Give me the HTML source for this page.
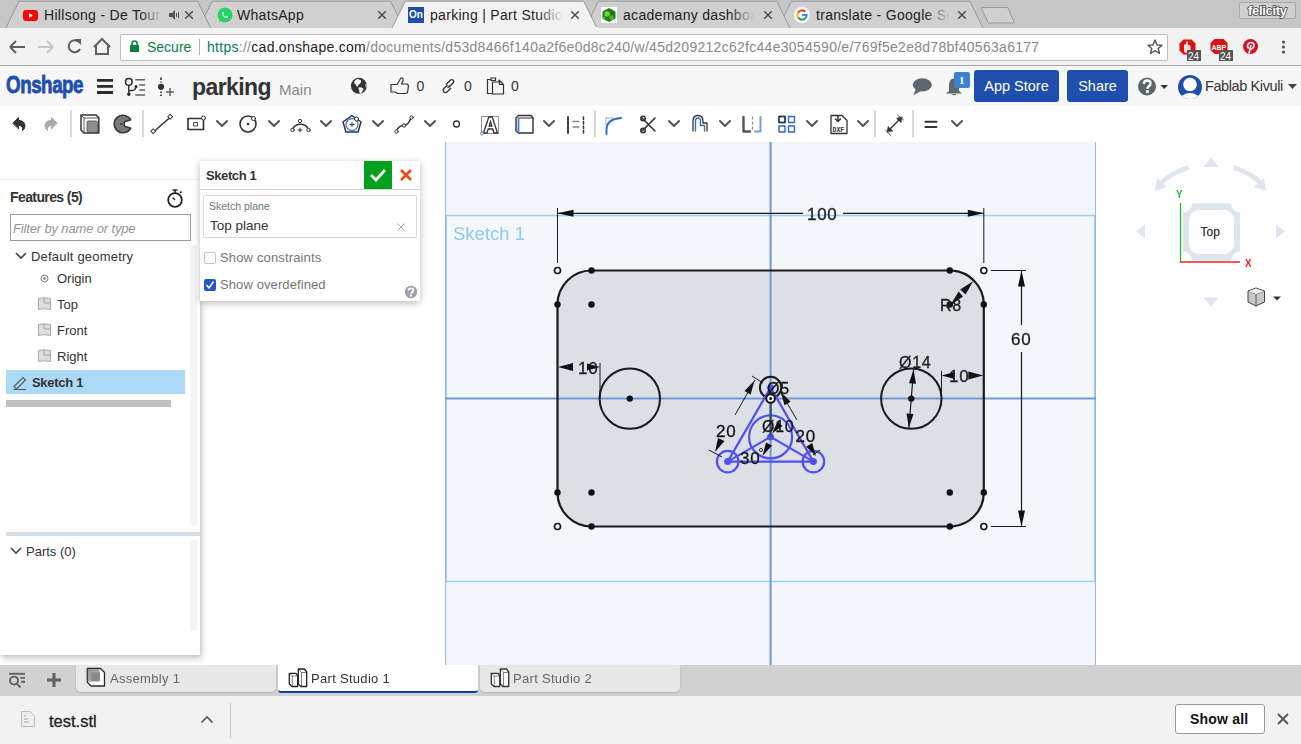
<!DOCTYPE html>
<html><head><meta charset="utf-8">
<style>
*{box-sizing:border-box;margin:0;padding:0}
html,body{width:1301px;height:744px;overflow:hidden;background:#fff;font-family:"Liberation Sans",sans-serif;position:relative}
.a{position:absolute}
.t{position:absolute;white-space:nowrap;line-height:1}
svg{position:absolute;overflow:visible}
#tabbar{left:0;top:0;width:1301px;height:29px;background:#c6c6c6}
#toolbar{left:0;top:28px;width:1301px;height:38px;background:#f2f2f2;border-top:1px solid #a8a8a8;border-bottom:1px solid #a6a6a6}
#omni{left:120px;top:34px;width:1048px;height:27px;background:#fff;border:1px solid #bdbdbd;border-radius:2px}
#header{left:0;top:66px;width:1301px;height:40px;background:#f7f7f7}
#tools{left:0;top:106px;width:1301px;height:36px;background:#fff}
#canvas{left:445px;top:142px;width:651px;height:523px;background:#f3f6fa}
#btabs{left:0;top:665px;width:1301px;height:31px;background:#d1d1d1}
#shelf{left:0;top:696px;width:1301px;height:48px;background:#f2f2f2}
.tabtxt{font-size:14px;color:#222;top:8px;overflow:hidden;height:18px}
.btn{position:absolute;background:#1f4fae;color:#fff;font-size:14.5px;border-radius:3px;text-align:center;line-height:33px}
</style></head><body>
<div id="tabbar" class="a"></div>
<!-- tabs -->
<svg width="1301" height="30" style="left:0;top:0">
  <g stroke="#999" stroke-width="1"><path d="M778.0 28.5 L791.4 1.2 L969.9 1.2 L983.3 28.5" fill="#d0d0d0"/><path d="M584.9 28.5 L598.3 1.2 L776.8 1.2 L790.2 28.5" fill="#d0d0d0"/><path d="M198.7 28.5 L212.1 1.2 L390.6 1.2 L404.0 28.5" fill="#d0d0d0"/><path d="M5.6 28.5 L19.0 1.2 L197.5 1.2 L210.9 28.5" fill="#d0d0d0"/></g>
  <path d="M982 7.5 Q981 7.5 981.6 8.6 L988 22.4 Q988.3 23 989 23 H1013.5 Q1014.5 23 1014 22 L1008 8 Q1007.7 7.5 1007 7.5 Z" fill="#d0d0d0" stroke="#999" stroke-width="1"/>
  <path d="M0 28.5 L1301 28.5" stroke="#999"/>
  <path stroke="#999" stroke-width="1" d="M391.8 28.5 L405.2 1.2 L583.7 1.2 L597.1 28.5" fill="#f2f2f2"/>
</svg>
<div id="toolbar" class="a" style="border-top:none"></div>
<svg width="1301" height="30" style="left:0;top:0">
  <rect x="392.9" y="27" width="205.6" height="3" fill="#f2f2f2"/>
</svg>
<!-- tab contents -->
<svg width="15" height="11" style="left:23px;top:10px"><rect x="0" y="0" width="15" height="11" rx="3" fill="#f00"/><path d="M6 3 L10 5.5 L6 8 Z" fill="#fff"/></svg>
<div class="t tabtxt" style="left:44px;width:122px;letter-spacing:0.3px">Hillsong - De Tour</div>
<div class="a" style="left:140px;top:4px;width:22px;height:22px;background:linear-gradient(to right,rgba(0,0,0,0),#d0d0d0)"></div><div class="a" style="left:162px;top:4px;width:6px;height:22px;background:#d0d0d0"></div>
<svg width="10" height="10" style="left:169px;top:10px"><path d="M0 3 H3 L6 0 V10 L3 7 H0 Z" fill="#555"/><path d="M7.5 3 V7 M9.5 2 V8" stroke="#555" stroke-width="1"/></svg>
<svg width="10" height="10" style="left:184px;top:10px"><path d="M1.2 1.2 L8.8 8.8 M8.8 1.2 L1.2 8.8" stroke="#4a4a4a" stroke-width="1.4"/></svg>
<svg width="16" height="16" style="left:217px;top:7px"><circle cx="8" cy="8" r="7.5" fill="#25d366"/><path d="M2 15 L3 11 L6 13 Z" fill="#25d366"/><path d="M5 5 C5 9 7 11 11 11 L11 9.5 L9.5 9 L8.7 9.8 C7.5 9.2 6.8 8.5 6.2 7.3 L7 6.5 L6.5 5 Z" fill="#fff"/></svg>
<div class="t tabtxt" style="left:237px;letter-spacing:0.3px">WhatsApp</div>
<svg width="10" height="10" style="left:377px;top:10px"><path d="M1.2 1.2 L8.8 8.8 M8.8 1.2 L1.2 8.8" stroke="#4a4a4a" stroke-width="1.4"/></svg>
<div class="a" style="left:408px;top:7px;width:16px;height:16px;background:#1e4ea8;color:#fff;font-size:10px;font-weight:bold;line-height:16px;text-align:center">On</div>
<div class="t tabtxt" style="left:430px;width:135px;letter-spacing:0.3px">parking | Part Studio</div>
<div class="a" style="left:537px;top:4px;width:26px;height:22px;background:linear-gradient(to right,rgba(0,0,0,0),#f2f2f2)"></div><div class="a" style="left:563px;top:4px;width:6px;height:22px;background:#f2f2f2"></div><svg width="10" height="10" style="left:570px;top:10px"><path d="M1.2 1.2 L8.8 8.8 M8.8 1.2 L1.2 8.8" stroke="#4a4a4a" stroke-width="1.4"/></svg>
<svg width="16" height="16" style="left:601px;top:7px"><rect width="16" height="16" fill="#fff"/><path d="M8 1 L14.5 4.5 V11.5 L8 15 L1.5 11.5 V4.5 Z" fill="#1d7a16"/><circle cx="6" cy="7" r="2.8" fill="#6fd13b"/><circle cx="10.5" cy="10.5" r="2.2" fill="#52b52b"/><circle cx="3" cy="11" r="1.5" fill="#52b52b"/></svg>
<div class="t tabtxt" style="left:623px;width:135px;letter-spacing:0.3px">academany dashboard</div>
<div class="a" style="left:729px;top:4px;width:26px;height:22px;background:linear-gradient(to right,rgba(0,0,0,0),#d0d0d0)"></div><div class="a" style="left:755px;top:4px;width:6px;height:22px;background:#d0d0d0"></div><svg width="10" height="10" style="left:763px;top:10px"><path d="M1.2 1.2 L8.8 8.8 M8.8 1.2 L1.2 8.8" stroke="#4a4a4a" stroke-width="1.4"/></svg>
<svg width="16" height="16" style="left:794px;top:7px"><circle cx="8" cy="8" r="8" fill="#fff"/>
<path d="M11.3 4.8 A4.6 4.6 0 0 0 4.1 5.6" stroke="#ea4335" stroke-width="2.1" fill="none"/>
<path d="M4.1 5.6 A4.6 4.6 0 0 0 4.1 10.4" stroke="#fbbc05" stroke-width="2.1" fill="none"/>
<path d="M4.1 10.4 A4.6 4.6 0 0 0 11.6 11" stroke="#34a853" stroke-width="2.1" fill="none"/>
<path d="M11.6 11 A4.6 4.6 0 0 0 12.6 8 H8" stroke="#4285f4" stroke-width="2.1" fill="none"/>
</svg>
<div class="t tabtxt" style="left:816px;width:135px;letter-spacing:0.3px">translate - Google Search</div>
<div class="a" style="left:924px;top:4px;width:26px;height:22px;background:linear-gradient(to right,rgba(0,0,0,0),#d0d0d0)"></div><div class="a" style="left:950px;top:4px;width:6px;height:22px;background:#d0d0d0"></div><svg width="10" height="10" style="left:957px;top:10px"><path d="M1.2 1.2 L8.8 8.8 M8.8 1.2 L1.2 8.8" stroke="#4a4a4a" stroke-width="1.4"/></svg>
<div class="a" style="left:1239px;top:2px;width:57px;height:17px;border:1px solid #aaa;border-radius:2px;background:#cfcfcf"></div>
<div class="t" style="left:1248px;top:4px;font-size:13px;font-weight:bold;color:#fff;-webkit-text-stroke:1.6px #444;paint-order:stroke fill;letter-spacing:-0.3px">felicity</div>

<!-- address bar -->
<div id="omni" class="a"></div>
<svg width="110" height="30" style="left:0;top:32px">
  <path d="M10 15 H25 M10 15 L16 9 M10 15 L16 21" stroke="#5f5f5f" stroke-width="2" fill="none"/>
  <path d="M38 15 H53 M53 15 L47 9 M53 15 L47 21" stroke="#c6c6c6" stroke-width="2" fill="none"/>
  <path d="M79 10 A6 6 0 1 0 80 17" stroke="#5f5f5f" stroke-width="2" fill="none"/><path d="M75 7 L81 7 L81 13 Z" fill="#5f5f5f"/>
  <path d="M94 15 L102 7 L110 15 M96 13 V22 H108 V13" stroke="#5f5f5f" stroke-width="2" fill="none"/>
</svg>
<svg width="10" height="12" style="left:130px;top:40px"><rect x="0" y="5" width="9" height="7" fill="#0b8043"/><path d="M2 5 V3.5 A2.5 2.5 0 0 1 7 3.5 V5" stroke="#0b8043" stroke-width="1.6" fill="none"/></svg>
<div class="t" style="left:147px;top:40px;font-size:14px;color:#0b8043">Secure</div>
<div class="a" style="left:199px;top:39px;width:1px;height:16px;background:#b5b5b5"></div>
<div class="t" style="left:207px;top:40px;font-size:14px;color:#888;letter-spacing:0.28px"><span style="color:#0b8043">https</span>://<span style="color:#222">cad.onshape.com</span>/documents/d53d8466f140a2f6e0d8c240/w/45d209212c62fc44e3054590/e/769f5e2e8d78bf40563a6177</div>

<svg width="140" height="40" style="left:1160px;top:28px">
  <g transform="translate(-1160 -28)">
  <path d="M1183.5 39.5 H1191.5 L1195.5 43.5 V50.5 L1191.5 54.5 H1183.5 L1179.5 50.5 V43.5 Z" fill="#e01010"/>
  <path d="M1184 52 V45 Q1185 43 1186 45 V42 Q1187 40.5 1188 42 V45 Q1189.5 44 1190.5 46 V50 Q1190 53 1187 53 Z" fill="#fff" opacity="0.85"/>
  <rect x="1187" y="50" width="14" height="11" fill="#555"/>
  <text x="1188" y="59.5" font-size="10" fill="#fff" font-family="Liberation Sans">24</text>
  <path d="M1214.5 39 H1223.5 L1227.5 43 V50 L1223.5 54 H1214.5 L1210.5 50 V43 Z" fill="#d81414"/>
  <text x="1211.5" y="50" font-size="7" font-weight="bold" fill="#fff" font-family="Liberation Sans">ABP</text>
  <rect x="1219" y="50" width="14" height="11" fill="#555"/>
  <text x="1220" y="59.5" font-size="10" fill="#fff" font-family="Liberation Sans">24</text>
  <circle cx="1250.5" cy="46.5" r="7.5" fill="#d50c22"/>
  <circle cx="1250.5" cy="46.5" r="6" fill="none" stroke="#fff" stroke-width="0" />
  <path d="M1249 53.5 L1251 45 M1248.5 48.5 Q1246.5 46 1248.5 43.5 Q1251 41.5 1253.5 43.5 Q1255 46 1252.5 48.5 Q1250.5 49.5 1250 48" stroke="#fff" stroke-width="1.6" fill="none"/>
  <circle cx="1283.5" cy="42" r="1.6" fill="#555"/><circle cx="1283.5" cy="47" r="1.6" fill="#555"/><circle cx="1283.5" cy="52" r="1.6" fill="#555"/>
  <path d="M1155 40 L1157 45 L1162 45.3 L1158.2 48.5 L1159.5 53.5 L1155 50.7 L1150.5 53.5 L1151.8 48.5 L1148 45.3 L1153 45 Z" fill="none" stroke="#555" stroke-width="1.4" stroke-linejoin="round"/>
  </g>
</svg>

<!-- onshape header -->
<div id="header" class="a"></div>
<div class="t" style="left:6px;top:74px;font-size:23.5px;font-weight:bold;color:#1f4fae;letter-spacing:-0.6px;transform:scaleX(0.8);transform-origin:left;-webkit-text-stroke:0.8px #1f4fae">Onshape</div>
<svg width="100" height="34" style="left:90px;top:70px">
  <g transform="translate(-90 -70)">
  <path d="M97 80.4 H113 M97 86.4 H113 M97 92.5 H113" stroke="#2b2b2b" stroke-width="2.8"/>
  <circle cx="128.8" cy="81.9" r="3.3" fill="none" stroke="#2b2b2b" stroke-width="1.5"/>
  <path d="M128.8 85.2 V94 M128.8 91 Q129 90.5 132 90.5 Q135.5 90.5 136 86.5" fill="none" stroke="#2b2b2b" stroke-width="1.4"/>
  <circle cx="128.8" cy="94.3" r="1.7" fill="#2b2b2b"/><circle cx="136" cy="86.5" r="1.5" fill="#2b2b2b"/>
  <path d="M135.3 79.8 H145 M139.3 85 H145 M139.3 90 H145 M135.3 95 H145" stroke="#56636e" stroke-width="1.6"/>
  <path d="M161 77.5 V80 M161 81.5 V82.5 M161 91.5 V93 M161 94.5 V96" stroke="#111" stroke-width="1.4"/>
  <circle cx="161" cy="86.8" r="3.1" fill="#333"/>
  <path d="M166 92 H174 M170 88 V96" stroke="#56636e" stroke-width="1.6"/>
  </g>
</svg>
<div class="t" style="left:192px;top:76px;font-size:23px;font-weight:bold;color:#333;letter-spacing:-0.6px">parking</div>
<div class="t" style="left:279px;top:82px;font-size:15px;color:#888">Main</div>
<svg width="200" height="30" style="left:340px;top:70px">
  <g transform="translate(-340 -70)">
  <circle cx="358.9" cy="85.8" r="8" fill="#333"/>
  <path d="M354.2 81.5 Q356 78.8 358.5 78.8 L359.5 80 L361 80.2 L361.2 82 L360 83.8 L358.5 84.5 L357.8 86.8 L356.5 86 L355.8 84.5 L354.6 84 Z" fill="#f7f7f7"/>
  <path d="M358.2 87.6 L361 87.2 L363.5 88.8 L362.8 91 L360.8 93.5 L359.6 93.2 L359.2 90.8 Z" fill="#f7f7f7"/>
  <path d="M365.3 83.8 L366.5 84.5 L366.6 87 L365.8 87.5 Z" fill="#f7f7f7"/>
  <path d="M391 84.5 H397 L401 78 Q403.5 77.5 403 80.5 L401.5 84 H407 Q409 85 408.3 87 L407.5 92.5 Q407 93.5 405.5 93.5 H397.5 L395 92 H391 Z" fill="none" stroke="#333" stroke-width="1.2" stroke-linejoin="round"/>
  <text x="416.5" y="91" font-size="14" fill="#333" font-family="Liberation Sans">0</text>
  <path d="M447.5 85 L443.5 89 Q442.5 90.5 444 92 Q445.5 93 447 92 L451 88 M449 87 L453 83 Q454.5 81.5 453 80 Q451.5 79 450 80.5 L446 84.5 M447.5 88 L450 85.5" fill="none" stroke="#333" stroke-width="1.4"/>
  <text x="464" y="91" font-size="14" fill="#333" font-family="Liberation Sans">0</text>
  <path d="M491 79.5 H487.5 V93.5 H492 M491 78 H495.5 V80.5 H491 Z M499 80 V82 H492.5 V94 H503.5 V84.5 L499.5 80.5 V84.5 H503.5" fill="none" stroke="#333" stroke-width="1.2"/>
  <text x="511" y="91" font-size="14" fill="#333" font-family="Liberation Sans">0</text>
  </g>
</svg>
<svg width="80" height="40" style="left:900px;top:66px">
  <g transform="translate(-900 -66)">
  <ellipse cx="922.3" cy="84.8" rx="9.6" ry="6.6" fill="#5e666d"/><path d="M916 89 L913.2 95.3 L922 90.5 Z" fill="#5e666d"/>
  <path d="M949 86 Q949 78.5 954 78.5 Q959 78.5 959 86 V91 L962 93.5 H946 L949 91 Z" fill="#5e666d"/><path d="M951.5 94 Q954 96.5 956.5 94 Z" fill="#5e666d"/>
  <rect x="954" y="72" width="16" height="16" rx="2" fill="#3d82d1"/><text x="959" y="84" font-size="11" font-weight="bold" fill="#fff" font-family="Liberation Serif">1</text>
  </g>
</svg>
<div class="btn" style="left:974px;top:70px;width:85px;height:32px">App Store</div>
<div class="btn" style="left:1067px;top:70px;width:61px;height:32px">Share</div>
<svg width="170" height="40" style="left:1130px;top:66px">
  <g transform="translate(-1130 -66)">
  <circle cx="1147" cy="86.5" r="9" fill="#5e666d"/>
  <path d="M1143.8 84 Q1143.8 80.5 1147.2 80.5 Q1150.5 80.5 1150.5 83.5 Q1150.5 85.5 1148.5 86.5 Q1147.5 87 1147.5 89" stroke="#fff" stroke-width="2.4" fill="none"/>
  <rect x="1146" y="90.3" width="2.8" height="2.6" fill="#fff"/>
  <path d="M1160.5 85 H1168 L1164.2 89 Z" fill="#333"/>
  <clipPath id="avc"><circle cx="1190" cy="87" r="12"/></clipPath>
  <circle cx="1190" cy="87" r="12" fill="#1f4fae"/>
  <g clip-path="url(#avc)"><circle cx="1190" cy="84.5" r="6.8" fill="#fff"/><ellipse cx="1190" cy="101" rx="10" ry="8" fill="#fff"/></g>
  </g>
</svg>
<div class="t" style="left:1205px;top:79px;font-size:14.5px;color:#333;letter-spacing:-0.4px">Fablab Kivuli</div>
<svg width="10" height="6" style="left:1288px;top:84px"><path d="M0 0 H9 L4.5 5 Z" fill="#444"/></svg>


<div id="tools" class="a"></div>
<svg width="1000" height="36" style="left:0;top:106px" fill="none" stroke-linecap="round" stroke-linejoin="round">
  <!-- undo / redo -->
  <path d="M13 17 L18.5 11.5 L18.5 14.5 Q25 14.5 25 20 Q25 23 22.5 24.5 Q23.5 19.5 18.5 19.5 L18.5 22.5 Z" fill="#333" stroke="#333" stroke-width="1"/>
  <path d="M57 17 L51.5 11.5 L51.5 14.5 Q45 14.5 45 20 Q45 23 47.5 24.5 Q46.5 19.5 51.5 19.5 L51.5 22.5 Z" fill="#aaa" stroke="#aaa" stroke-width="1"/>
  <path d="M71 5 V30.5 M143 5 V30.5 M595 5 V30.5 M875 5 V30.5 M913 5 V30.5" stroke="#d6d6d6" stroke-width="2"/>
  <!-- sheet metal -->
  <path d="M81 9 H96 L98.8 11.8 V27 H84 L81 24 Z" fill="#fff" stroke="#333" stroke-width="1.5"/>
  <path d="M81 9 L84 12 H98.8 M84 12 V27" stroke="#333" stroke-width="0.8"/>
  <path d="M88 15 H96.5 L98 16.5 V26.5 H88 Z" fill="#8f8f8f" stroke="#444" stroke-width="0.8"/>
  <path d="M86.5 15.5 L88 15 V26.5 L86.5 25.5 Z" fill="#777"/>
  <!-- C revolve -->
  <path d="M130.77 13.87 A8.8 8.8 0 1 0 130.77 22.13 L127.0 21.0 A3 3 0 0 1 127.0 15.0 Z" fill="#7a7a7a" stroke="#333" stroke-width="1.5" stroke-linejoin="round"/><circle cx="121" cy="18" r="0.9" fill="#333" stroke="none"/>
  <!-- line -->
  <path d="M154 25.5 L170.5 11" stroke="#333" stroke-width="1.6"/>
  <rect x="151.5" y="23.5" width="3.5" height="3.5" transform="rotate(45 153.2 25.2)" fill="#fff" stroke="#333" stroke-width="1"/>
  <rect x="168.5" y="9" width="3.5" height="3.5" transform="rotate(45 170.2 10.7)" fill="#fff" stroke="#333" stroke-width="1"/>
  <!-- rect -->
  <rect x="188" y="12.5" width="15.5" height="11" stroke="#333" stroke-width="1.6"/>
  <rect x="194" y="16.5" width="3.5" height="3.5" stroke="#333" stroke-width="0.9"/>
  <circle cx="203.5" cy="12" r="2" fill="#fff" stroke="#333" stroke-width="1"/>
  <g stroke="#555" stroke-width="2"><path d="M217 15 L222 20 L227 15"/><path d="M269 15 L274 20 L279 15"/><path d="M321 15 L326 20 L331 15"/><path d="M373 15 L378 20 L383 15"/><path d="M425 15 L430 20 L435 15"/>
  <path d="M544 15 L549 20 L554 15"/><path d="M669 15 L674 20 L679 15"/><path d="M720 15 L725 20 L730 15"/><path d="M807 15 L812 20 L817 15"/><path d="M858 15 L863 20 L868 15"/><path d="M952 15 L957 20 L962 15"/></g>
  <!-- circle -->
  <circle cx="248" cy="18" r="8" stroke="#333" stroke-width="1.6"/><circle cx="248" cy="18" r="1.3" fill="#333" stroke="none"/>
  <circle cx="253.5" cy="12.5" r="2" fill="#fff" stroke="#333" stroke-width="1"/>
  <!-- arc -->
  <path d="M292.5 23.5 A8.5 8 0 0 1 308.5 23.5" stroke="#333" stroke-width="1.5"/>
  <circle cx="300" cy="15" r="1.7" fill="#fff" stroke="#333" stroke-width="1"/><circle cx="292.5" cy="24" r="1.7" fill="#fff" stroke="#333" stroke-width="1"/><circle cx="308.5" cy="24" r="1.7" fill="#fff" stroke="#333" stroke-width="1"/>
  <path d="M298 24 H302 M300 22 V26" stroke="#333" stroke-width="1"/>
  <!-- polygon -->
  <path d="M352 9.5 L361 16 L358 26 H346 L343 16 Z" stroke="#333" stroke-width="1.5"/>
  <circle cx="352" cy="18.5" r="6" stroke="#3f7fd6" stroke-width="1.3"/>
  <path d="M350 18.5 H354 M352 16.5 V20.5" stroke="#333" stroke-width="1"/>
  <circle cx="356.5" cy="13" r="2" fill="#fff" stroke="#333" stroke-width="1"/>
  <!-- spline -->
  <path d="M396.5 25 Q399 19 404 19.5 Q408 19.5 411 12" stroke="#333" stroke-width="1.5"/>
  <circle cx="396.5" cy="25.5" r="1.7" fill="#fff" stroke="#333" stroke-width="1"/><circle cx="404" cy="19.5" r="1.7" fill="#fff" stroke="#333" stroke-width="1"/><circle cx="411.5" cy="11.5" r="1.7" fill="#fff" stroke="#333" stroke-width="1"/>
  <!-- point -->
  <circle cx="456.5" cy="18" r="3" stroke="#333" stroke-width="1.3"/>
  <!-- text A -->
  <rect x="481.5" y="10.5" width="17" height="17" stroke="#666" stroke-width="0.8" stroke-dasharray="1 1"/>
  <path d="M483.5 27 L488.8 11 H492.2 L497.5 27 H494 L492.8 23 H488.2 L487 27 Z M489.2 20 H491.8 L490.5 15.5 Z" fill="#fff" stroke="#333" stroke-width="1.3" stroke-linejoin="miter"/>
  <circle cx="482" cy="27.5" r="1.5" fill="#fff" stroke="#3f7fd6" stroke-width="0.9"/>
  <!-- use/project -->
  <path d="M516 12 L518.5 9.5 H531 L533 12 V27 H518.5 L516 25 Z" stroke="#333" stroke-width="1.4"/>
  <path d="M516 12 H531 L533 12 M531 9.5 V27" stroke="#333" stroke-width="0"/>
  <path d="M518.5 12 H533 M518.5 12 V27" stroke="#333" stroke-width="1.2"/>
  <path d="M518.5 13 V27" stroke="#3f7fd6" stroke-width="1.6"/>
  <!-- mirror -->
  <path d="M568 11 V27 M583.5 11 V27" stroke="#333" stroke-width="1.5" stroke-dasharray="2.5 2"/>
  <path d="M568 11 V27" stroke="#333" stroke-width="1.6"/>
  <path d="M573 15.5 H579 M573 21 H579" stroke="#888" stroke-width="1.4"/>
  <!-- fillet -->
  <path d="M606.5 28 V24 Q606.5 13 621 12" stroke="#2a6ac9" stroke-width="2"/>
  <path d="M606 12 H614 M606 12 V20" stroke="#666" stroke-width="0.6" stroke-dasharray="1 1"/>
  <!-- scissors -->
  <path d="M642 12 L655 25 M655 12 L642 25" stroke="#333" stroke-width="1.6"/>
  <circle cx="643" cy="12.5" r="2.2" stroke="#333" stroke-width="1.6"/><circle cx="643" cy="24.5" r="2.2" stroke="#333" stroke-width="1.6"/>
  <!-- offset -->
  <path d="M693 25 V15 Q693 9.5 698 9.5 Q703 9.5 703 15 V17 H707 V25" stroke="#333" stroke-width="1.3"/>
  <path d="M695.5 25 V15 Q695.5 12 698 12 Q700.5 12 700.5 15 V19.5 H704.5 V25" stroke="#2a6ac9" stroke-width="1.3"/>
  <!-- L|J mirror-->
  <path d="M743.5 11 V25.5 H750" stroke="#555" stroke-width="2.4"/>
  <path d="M752.5 11 V13 M752.5 16 V18 M752.5 21 V23" stroke="#888" stroke-width="1.2"/>
  <path d="M760.5 11 V25.5 H755" stroke="#6fa4e0" stroke-width="2"/>
  <!-- grid pattern -->
  <g stroke="#2a6ac9" stroke-width="1.4"><rect x="779" y="10.5" width="6" height="6"/><rect x="788.5" y="10.5" width="6" height="6"/><rect x="779" y="20" width="6" height="6"/><rect x="788.5" y="20" width="6" height="6"/></g>
  <rect x="779" y="10.5" width="6" height="6" stroke="#333" stroke-width="1.4"/>
  <!-- DXF -->
  <path d="M831 9.5 H842 L847 14.5 V27.5 H831 Z" stroke="#333" stroke-width="1.3"/>
  <path d="M838 10 V15 M835.5 13 L838 15.5 L840.5 13" stroke="#333" stroke-width="1.5"/>
  <text x="832.5" y="26" font-size="6.5" font-weight="bold" fill="#333" stroke="none" font-family="Liberation Mono">DXF</text>
  <!-- dimension -->
  <path d="M889.5 23.5 L899.5 13.5" stroke="#333" stroke-width="1.4"/>
  <path d="M887 26 L888.2 20.5 L892.5 24.8 Z M902 11 L896.5 12.2 L900.8 16.5 Z" fill="#333" stroke="#333" stroke-width="0.6" stroke-linejoin="round"/>
  <path d="M885.5 24 L891 30 M897.5 9 L903.5 14" stroke="#444" stroke-width="0.8"/>
  <!-- equals -->
  <path d="M925.5 15.8 H936.5 M925.5 21 H936.5" stroke="#333" stroke-width="2.1"/>
</svg>

<svg width="651" height="523" style="left:445px;top:142px;overflow:hidden;will-change:transform"><g transform="translate(-445 -142)">
<rect x="445" y="142" width="651" height="523" fill="#f3f6fa"/>
<path d="M445 215.5 H1096 M445 581.5 H1096" stroke="#9dd0f2" stroke-width="1.3"/>
<path d="M445.5 142 V665" stroke="#a4badf" stroke-width="1.2"/><path d="M445.8 215.5 V581.5" stroke="#8bbde8" stroke-width="1.8"/>
<path d="M1095.5 142 V665" stroke="#a4badf" stroke-width="1.2"/><path d="M1095.2 215.5 V581.5" stroke="#8bbde8" stroke-width="1.8"/>
<rect x="557.5" y="270.5" width="426.29999999999995" height="256.0" rx="34" ry="34" fill="#dcdfe6"/>
<path d="M770.6 142 V665 M445 398.5 H1096" stroke="#6f9bd0" stroke-width="2"/>
<text x="453" y="239.5" font-size="18.5" fill="#8ecbee" font-family="Liberation Sans">Sketch 1</text>
<rect x="557.5" y="270.5" width="426.29999999999995" height="256.0" rx="34" ry="34" fill="none" stroke="#1a1a1a" stroke-width="2.2"/>
<circle cx="591.5" cy="270.5" r="3.2" fill="#111"/>
<circle cx="557.5" cy="304.5" r="3.2" fill="#111"/>
<circle cx="591.5" cy="304.5" r="3.2" fill="#111"/>
<circle cx="949.8" cy="270.5" r="3.2" fill="#111"/>
<circle cx="983.8" cy="304.5" r="3.2" fill="#111"/>
<circle cx="949.8" cy="304.5" r="3.2" fill="#111"/>
<circle cx="557.5" cy="492.5" r="3.2" fill="#111"/>
<circle cx="591.5" cy="526.5" r="3.2" fill="#111"/>
<circle cx="591.5" cy="492.5" r="3.2" fill="#111"/>
<circle cx="983.8" cy="492.5" r="3.2" fill="#111"/>
<circle cx="949.8" cy="526.5" r="3.2" fill="#111"/>
<circle cx="949.8" cy="492.5" r="3.2" fill="#111"/>
<circle cx="557.5" cy="270.5" r="3" fill="#fff" stroke="#111" stroke-width="1.6"/>
<circle cx="983.8" cy="270.5" r="3" fill="#fff" stroke="#111" stroke-width="1.6"/>
<circle cx="557.5" cy="526.5" r="3" fill="#fff" stroke="#111" stroke-width="1.6"/>
<circle cx="983.8" cy="526.5" r="3" fill="#fff" stroke="#111" stroke-width="1.6"/>
<circle cx="629.8" cy="398.6" r="30.2" fill="none" stroke="#1a1a1a" stroke-width="2"/>
<circle cx="629.8" cy="398.6" r="3.2" fill="#111"/>
<circle cx="911.3" cy="398.6" r="30.2" fill="none" stroke="#1a1a1a" stroke-width="2"/>
<circle cx="911.3" cy="398.6" r="3.2" fill="#111"/>
<path d="M557.5 208 V263 M983.8 208 V263" stroke="#1a1a1a" stroke-width="1"/>
<path d="M557.5 213.3 H803 M843 213.3 H983.8" stroke="#1a1a1a" stroke-width="1.2"/>
<path d="M557.5 213.3 L573.5 209.8 L573.5 216.8 Z" fill="#111"/>
<path d="M983.8 213.3 L967.8 216.8 L967.8 209.8 Z" fill="#111"/>
<text x="807" y="220" font-size="17" fill="#222" font-family="Liberation Sans" stroke="#1a1a1a" stroke-width="0.3" letter-spacing="0.7">100</text>
<path d="M991 270.5 H1026 M991 526.5 H1026" stroke="#1a1a1a" stroke-width="1"/>
<path d="M1021.5 270.5 V325 M1021.5 352 V526.5" stroke="#1a1a1a" stroke-width="1.2"/>
<path d="M1021.5 270.5 L1025.0 286.5 L1018.0 286.5 Z" fill="#111"/>
<path d="M1021.5 526.5 L1018.0 510.5 L1025.0 510.5 Z" fill="#111"/>
<text x="1011" y="345" font-size="17" fill="#222" font-family="Liberation Sans" stroke="#1a1a1a" stroke-width="0.3" letter-spacing="0.7">60</text>
<text x="940" y="310.5" font-size="16" fill="#222" font-family="Liberation Sans" stroke="#1a1a1a" stroke-width="0.3" letter-spacing="0.7">R8</text>
<path d="M973.3 281 L960.2 289.5 L965.6 294.5 Z" fill="#151515"/>
<path d="M958.6 291.5 L963 296.5 L950 305.6 Z" fill="#151515"/>
<path d="M600 363 V398" stroke="#1a1a1a" stroke-width="1"/>

<path d="M558.0 367.0 L573.0 363.0 L573.0 371.0 Z" fill="#111"/>
<path d="M600.0 367.0 L587.0 370.5 L587.0 363.5 Z" fill="#111"/>
<text x="578" y="373.5" font-size="17" fill="#222" font-family="Liberation Sans" stroke="#1a1a1a" stroke-width="0.3" letter-spacing="0.7">10</text>
<path d="M941.5 371 V398" stroke="#1a1a1a" stroke-width="1"/>

<path d="M941.5 375.6 L954.5 372.1 L954.5 379.1 Z" fill="#111"/>
<path d="M983.3 375.6 L968.3 379.6 L968.3 371.6 Z" fill="#111"/>
<text x="949" y="382" font-size="17" fill="#222" font-family="Liberation Sans" stroke="#1a1a1a" stroke-width="0.3" letter-spacing="0.7">10</text>
<path d="M913.6 369.5 L908.9 427.8" stroke="#1a1a1a" stroke-width="1.2"/>
<path d="M913.6 369.5 L916.0 383.7 L909.0 383.2 Z" fill="#111"/>
<path d="M908.9 427.8 L906.5 413.6 L913.5 414.1 Z" fill="#111"/>
<text x="899" y="368" font-size="16" fill="#222" font-family="Liberation Sans" stroke="#1a1a1a" stroke-width="0.3" letter-spacing="0.7">Ø14</text>
<circle cx="770.6" cy="387.5" r="10.7" fill="none" stroke="#1a1a1a" stroke-width="2"/>
<path d="M727.7 461.6 L813.4 461.6 L770.6 387.5 Z M727.7 461.6 L770.6 436.9 L813.4 461.6" fill="none" stroke="#5050ee" stroke-width="2.2" stroke-linejoin="round"/>
<circle cx="770.6" cy="436.9" r="21.5" fill="none" stroke="#5050ee" stroke-width="2.2"/>
<circle cx="727.7" cy="461.6" r="10.8" fill="none" stroke="#5050ee" stroke-width="2.2"/>
<circle cx="727.7" cy="461.6" r="3.5" fill="#5050ee"/>
<circle cx="813.4" cy="461.6" r="10.8" fill="none" stroke="#5050ee" stroke-width="2.2"/>
<circle cx="813.4" cy="461.6" r="3.5" fill="#5050ee"/>
<circle cx="770.6" cy="436.9" r="3.5" fill="#5050ee"/>
<circle cx="770.6" cy="387.5" r="3.2" fill="#5050ee"/>
<path d="M770.6 398 V437" stroke="#2f4d78" stroke-width="2.2"/>
<circle cx="770.6" cy="398.5" r="4.3" fill="#fff" stroke="#111" stroke-width="2"/><circle cx="770.6" cy="398.5" r="1.5" fill="#111"/>
<path d="M735 415 L755 380 M752 376 L763 383 M709 450 L722 457 M797 420 L780 391 M813 455 L820 450" stroke="#1a1a1a" stroke-width="1"/>
<path d="M754.5 380.5 L750.6 394.4 L744.5 390.9 Z" fill="#111"/>
<path d="M715 452 L718 438 L724.5 441 Z" fill="#111"/>
<path d="M780.5 391.5 L790.6 401.8 L784.6 405.3 Z" fill="#111"/>
<path d="M816.0 456.0 L806.2 446.8 L812.2 443.1 Z" fill="#111"/>
<path d="M772 433.5 L777.5 421.5 L782.5 426 Z" fill="#111"/>
<path d="M762.5 456 L766 442.5 L772 445.5 Z" fill="#111"/>
<text x="716" y="437" font-size="17" fill="#111" font-family="Liberation Sans" stroke="#1a1a1a" stroke-width="0.3" letter-spacing="0.7">20</text>
<text x="795.5" y="442" font-size="17" fill="#111" font-family="Liberation Sans" stroke="#1a1a1a" stroke-width="0.3" letter-spacing="0.7">20</text>
<text x="762" y="432" font-size="16" fill="#111" font-family="Liberation Sans" stroke="#1a1a1a" stroke-width="0.3" letter-spacing="0.7">Ø10</text>
<text x="740" y="464" font-size="17" fill="#111" font-family="Liberation Sans" stroke="#1a1a1a" stroke-width="0.3" letter-spacing="0.7">30</text>
<circle cx="761" cy="450" r="1.6" fill="none" stroke="#111" stroke-width="0.8"/>
<text x="767" y="394" font-size="16" fill="#111" font-family="Liberation Sans" stroke="#1a1a1a" stroke-width="0.3" letter-spacing="0.7">Ø5</text>
</g></svg>
<svg width="170" height="170" style="left:1125px;top:150px;will-change:transform" fill="none">
 <g transform="translate(-1125 -150)">
  <path d="M1211 157.5 L1218.5 167 H1203.5 Z" fill="#dde5ee"/>
  <path d="M1211 306.5 L1218.5 297.5 H1203.5 Z" fill="#dde5ee"/>
  <path d="M1136 231.5 L1145 224.5 V238.5 Z" fill="#dde5ee"/>
  <path d="M1285 231.5 L1276 224.5 V238.5 Z" fill="#dde5ee"/>
  <path d="M1188.5 167.5 Q1171 173 1161 183" stroke="#dde5ee" stroke-width="4.5"/>
  <path d="M1155 191 L1157 178 L1167 187 Z" fill="#dde5ee"/>
  <path d="M1233.5 167.5 Q1251 173 1261 183" stroke="#dde5ee" stroke-width="4.5"/>
  <path d="M1266 191 L1264 178 L1254 187 Z" fill="#dde5ee"/>
  <path d="M1192 203.5 H1231 A9 9 0 0 0 1240 212.5 V251.5 A9 9 0 0 0 1231 260.5 H1192 A9 9 0 0 0 1183 251.5 V212.5 A9 9 0 0 0 1192 203.5 Z" fill="#dde5ee"/>
  <rect x="1189" y="210" width="45" height="44" rx="10" fill="#fff"/>
  <text x="1200.5" y="235.5" font-size="12" fill="#333" stroke="#333" stroke-width="0.25" font-family="Liberation Sans">Top</text>
  <path d="M1180.5 203 V262" stroke="#22bb22" stroke-width="1.3"/>
  <path d="M1180 262 H1240" stroke="#ee2222" stroke-width="1.3"/>
  <text x="1176" y="198" font-size="10" font-weight="bold" fill="#22bb22" font-family="Liberation Sans">Y</text>
  <text x="1245" y="267" font-size="10" font-weight="bold" fill="#ee2222" font-family="Liberation Sans">X</text>
  <path d="M1248 291 L1256 288 L1264.5 291 V302 L1256 306 L1248 302 Z" fill="#c8c8c8" stroke="#444" stroke-width="1"/>
  <path d="M1248 291 L1256 294 L1264.5 291 M1256 294 V306" stroke="#444" stroke-width="0.8"/>
  <path d="M1248.5 291.5 L1256 288.5 L1264 291.5 L1256 294 Z" fill="#eee"/>
  <path d="M1273 296.5 H1281 L1277 300.5 Z" fill="#333"/>
 </g>
</svg>


<!-- left panel -->
<div class="a" style="left:0;top:180px;width:200px;height:475px;background:#fff;box-shadow:2px 4px 6px rgba(0,0,0,0.2), 0 0 2px rgba(0,0,0,0.12)"></div>
<div class="t" style="left:10px;top:190px;font-size:14px;font-weight:bold;color:#333;letter-spacing:-0.6px">Features (5)</div>
<svg width="20" height="22" style="left:165px;top:188px" fill="none">
  <circle cx="10" cy="12" r="6.8" stroke="#222" stroke-width="1.8"/>
  <path d="M7.5 2 H12.5 M10 2 V5 M15 5 L16.5 3.5" stroke="#222" stroke-width="1.6"/>
  <path d="M10 12 L7.5 9.5" stroke="#222" stroke-width="1.2"/>
</svg>
<div class="a" style="left:10px;top:214px;width:181px;height:27px;border:1px solid #9c9c9c;background:#fff"></div>
<div class="t" style="left:13px;top:221.5px;font-size:13px;font-style:italic;color:#939393;letter-spacing:-0.15px">Filter by name or type</div>
<div class="a" style="left:190px;top:245px;width:7px;height:280px;background:#f3f6f9"></div>
<svg width="12" height="8" style="left:15px;top:252px"><path d="M1 1 L6 6 L11 1" stroke="#444" stroke-width="1.6" fill="none"/></svg>
<div class="t" style="left:31px;top:250px;font-size:13px;color:#333;letter-spacing:0.2px">Default geometry</div>
<svg width="9" height="9" style="left:40px;top:274px"><circle cx="4.5" cy="4.5" r="3.5" stroke="#777" stroke-width="1" fill="#fff"/><circle cx="4.5" cy="4.5" r="1.3" fill="#777"/></svg>
<div class="t" style="left:57px;top:272px;font-size:13px;color:#333">Origin</div>
<svg width="14" height="14" style="left:38px;top:297px"><path d="M0.5 1.5 Q6 0 12.5 1.5 V12.5 Q6 11 0.5 12.5 Z" fill="#ddd" stroke="#999" stroke-width="0.8"/><path d="M6 1 V6 H12.5" stroke="#999" stroke-width="0.8" fill="none"/></svg>
<div class="t" style="left:57px;top:298px;font-size:13px;color:#333">Top</div>
<svg width="14" height="14" style="left:38px;top:323px"><path d="M0.5 1.5 Q6 0 12.5 1.5 V12.5 Q6 11 0.5 12.5 Z" fill="#ddd" stroke="#999" stroke-width="0.8"/><path d="M6 1 V6 H12.5" stroke="#999" stroke-width="0.8" fill="none"/></svg>
<div class="t" style="left:57px;top:324px;font-size:13px;color:#333">Front</div>
<svg width="14" height="14" style="left:38px;top:349px"><path d="M0.5 1.5 Q6 0 12.5 1.5 V12.5 Q6 11 0.5 12.5 Z" fill="#ddd" stroke="#999" stroke-width="0.8"/><path d="M6 1 V6 H12.5" stroke="#999" stroke-width="0.8" fill="none"/></svg>
<div class="t" style="left:57px;top:350px;font-size:13px;color:#333">Right</div>
<div class="a" style="left:6px;top:370px;width:179px;height:24px;background:#abd9f6"></div>
<svg width="16" height="16" style="left:12px;top:374px" fill="none"><path d="M2 12.5 L11 3.5 L13.5 6 L4.5 15 Z M1.5 15.5 H14" stroke="#555" stroke-width="1.1"/></svg>
<div class="t" style="left:32px;top:376px;font-size:13px;font-weight:bold;color:#333;letter-spacing:-0.3px">Sketch 1</div>
<div class="a" style="left:6px;top:400px;width:165px;height:7px;background:#c1c1c1"></div>
<div class="a" style="left:6px;top:532px;width:194px;height:4px;background:#d3dfe9"></div>
<svg width="12" height="8" style="left:10px;top:547px"><path d="M1 1 L6 6 L11 1" stroke="#444" stroke-width="1.6" fill="none"/></svg>
<div class="t" style="left:26px;top:545px;font-size:13px;color:#333">Parts (0)</div>
<div class="a" style="left:190px;top:540px;width:7px;height:91px;background:#f3f6f9"></div>

<!-- sketch dialog -->
<div class="a" style="left:200px;top:161px;width:220px;height:140px;background:#fff;box-shadow:0 2px 7px rgba(0,0,0,0.28)"></div>
<div class="t" style="left:206px;top:169px;font-size:13px;font-weight:bold;color:#333;letter-spacing:-0.4px">Sketch 1</div>
<div class="a" style="left:200px;top:189px;width:220px;height:1px;background:#cbd4dd"></div>
<div class="a" style="left:364px;top:161px;width:28px;height:28px;background:#03a01d"></div>
<svg width="28" height="28" style="left:364px;top:161px"><path d="M7 14 L12 19 L21 9" stroke="#fff" stroke-width="2.8" fill="none"/></svg>
<svg width="14" height="14" style="left:399px;top:168px"><path d="M2 2 L12 12 M12 2 L2 12" stroke="#ea4a0e" stroke-width="2.8"/></svg>
<div class="a" style="left:203px;top:195px;width:214px;height:43px;border:1px solid #d9d9d9;border-radius:2px"></div>
<div class="t" style="left:209px;top:201px;font-size:10.5px;color:#6b7785">Sketch plane</div>
<div class="t" style="left:210px;top:219px;font-size:13.5px;color:#333">Top plane</div>
<svg width="10" height="10" style="left:396px;top:222px"><path d="M1.5 1.5 L8.5 8.5 M8.5 1.5 L1.5 8.5" stroke="#aaa" stroke-width="1"/></svg>
<div class="a" style="left:204px;top:252px;width:12px;height:12px;border:1px solid #c4c4c4;border-radius:2px;background:#fff"></div>
<div class="t" style="left:220px;top:251px;font-size:13px;color:#757575;letter-spacing:0.15px">Show constraints</div>
<div class="a" style="left:204px;top:279px;width:12px;height:12px;border-radius:2px;background:#2257c7"></div>
<svg width="12" height="12" style="left:204px;top:279px"><path d="M2.5 6 L5 9 L9.5 2.5" stroke="#fff" stroke-width="1.5" fill="none"/></svg>
<div class="t" style="left:220px;top:278px;font-size:13px;color:#757575;letter-spacing:0.1px">Show overdefined</div>
<svg width="14" height="14" style="left:404px;top:285px"><circle cx="7" cy="7" r="6.2" fill="#9ca2aa"/><path d="M4.6 5.6 Q4.6 3.3 7 3.3 Q9.4 3.3 9.4 5.3 Q9.4 6.5 8 7.2 Q7.1 7.7 7.1 8.7" stroke="#fff" stroke-width="1.8" fill="none"/><rect x="6.1" y="9.6" width="2" height="1.9" fill="#fff"/></svg>


<div id="btabs" class="a"></div>
<div class="a" style="left:76px;top:665px;width:200px;height:27px;background:#e8e8e8;border-radius:0 0 5px 5px;box-shadow:0 1px 2px rgba(0,0,0,0.15)"></div>
<div class="a" style="left:278px;top:665px;width:200px;height:28px;background:#fff;border-bottom:2px solid #0f3fa6;border-radius:0 0 3px 3px"></div>
<div class="a" style="left:480px;top:665px;width:200px;height:27px;background:#e8e8e8;border-radius:0 0 5px 5px;box-shadow:0 1px 2px rgba(0,0,0,0.15)"></div>
<svg width="70" height="31" style="left:0;top:664px" fill="none"><g transform="translate(0 -664)">
  <path d="M9 673.8 H25" stroke="#5f5f5f" stroke-width="1.9"/>
  <circle cx="14" cy="680.6" r="4" stroke="#5f5f5f" stroke-width="1.9"/><path d="M17 683.8 L20.5 687.5" stroke="#5f5f5f" stroke-width="1.9"/>
  <path d="M20.5 677.9 H25 M21 681.8 H25" stroke="#5f5f5f" stroke-width="1.9"/>
  <path d="M47 680 H61 M54 673 V687" stroke="#5f5f5f" stroke-width="3"/>
</g></svg>
<svg width="22" height="22" style="left:85px;top:666px" fill="none"><g transform="translate(-85 -666)">
  <path d="M87.3 668.5 H100.5 L104.5 672.5 V686 H91 L87.3 682.3 Z" fill="#fff" stroke="#2a2a2a" stroke-width="1.3" stroke-linejoin="round"/>
  <path d="M87.9 669.1 H98.8 L99.8 672.5 V681.3 H91.5 L87.9 681.8 Z" fill="#a0a0a0"/>
  <rect x="91.5" y="672.5" width="8.3" height="8.8" fill="#8a8a8a"/>
  <path d="M91.5 672.5 L87.9 669.1" stroke="#777" stroke-width="0.6"/>
</g></svg>
<div class="t" style="left:110px;top:672px;font-size:13px;color:#666;letter-spacing:0.3px">Assembly 1</div>
<svg width="24" height="24" style="left:287px;top:666px" fill="none"><g transform="translate(-287 -666)" stroke="#222" stroke-width="1.3" stroke-linejoin="round">
  <path d="M289.3 673.3 H296 L297.7 675.5 V686.5 H292 L289.3 684 Z" fill="#fff"/>
  <path d="M290.2 674.2 L292.3 676 H297.7 M292.3 676 V686.5" stroke-width="0.6"/>
  <path d="M298.3 669 H304.5 L306.7 672 V686.5 H301 L298.3 684 Z" fill="#fff"/>
  <path d="M299.2 670 L301.5 672.5 H306.7 M301.5 672.5 V686.5" stroke-width="0.6"/>
</g></svg>
<div class="t" style="left:311px;top:672px;font-size:13px;color:#333;letter-spacing:0.3px">Part Studio 1</div>
<svg width="24" height="24" style="left:489px;top:666px" fill="none"><g transform="translate(-489 -666)" stroke="#333" stroke-width="1.3" stroke-linejoin="round">
  <path d="M491.3 673.3 H498 L499.7 675.5 V686.5 H494 L491.3 684 Z" fill="#fff"/>
  <path d="M492.2 674.2 L494.3 676 H499.7 M494.3 676 V686.5" stroke-width="0.6"/>
  <path d="M500.3 669 H506.5 L508.7 672 V686.5 H503 L500.3 684 Z" fill="#fff"/>
  <path d="M501.2 670 L503.5 672.5 H508.7 M503.5 672.5 V686.5" stroke-width="0.6"/>
</g></svg>
<div class="t" style="left:513px;top:672px;font-size:13px;color:#666;letter-spacing:0.3px">Part Studio 2</div>


<div id="shelf" class="a"></div>
<svg width="16" height="18" style="left:20px;top:710px"><path d="M1.5 1.5 H10 L14.5 6 V16.5 H1.5 Z" fill="#eee" stroke="#bbb" stroke-width="1"/><path d="M4 6 H6 M4 9 H8 M4 12 H9" stroke="#999" stroke-width="0.8"/></svg>
<div class="t" style="left:49px;top:713px;font-size:16.5px;color:#222;-webkit-text-stroke:0.3px #222">test.stl</div>
<svg width="14" height="9" style="left:200px;top:715px"><path d="M1.5 7.5 L7 2 L12.5 7.5" stroke="#555" stroke-width="1.6" fill="none"/></svg>
<div class="a" style="left:230px;top:703px;width:1px;height:35px;background:#c8c8c8"></div>
<div class="a" style="left:1175px;top:704px;width:90px;height:30px;border:1px solid #9a9a9a;border-radius:3px;background:#fff"></div>
<div class="t" style="left:1190px;top:712px;font-size:14px;font-weight:bold;color:#111;letter-spacing:0.2px">Show all</div>
<svg width="12" height="12" style="left:1277px;top:713px"><path d="M1 1 L11 11 M11 1 L1 11" stroke="#555" stroke-width="1.8"/></svg>

</body></html>
